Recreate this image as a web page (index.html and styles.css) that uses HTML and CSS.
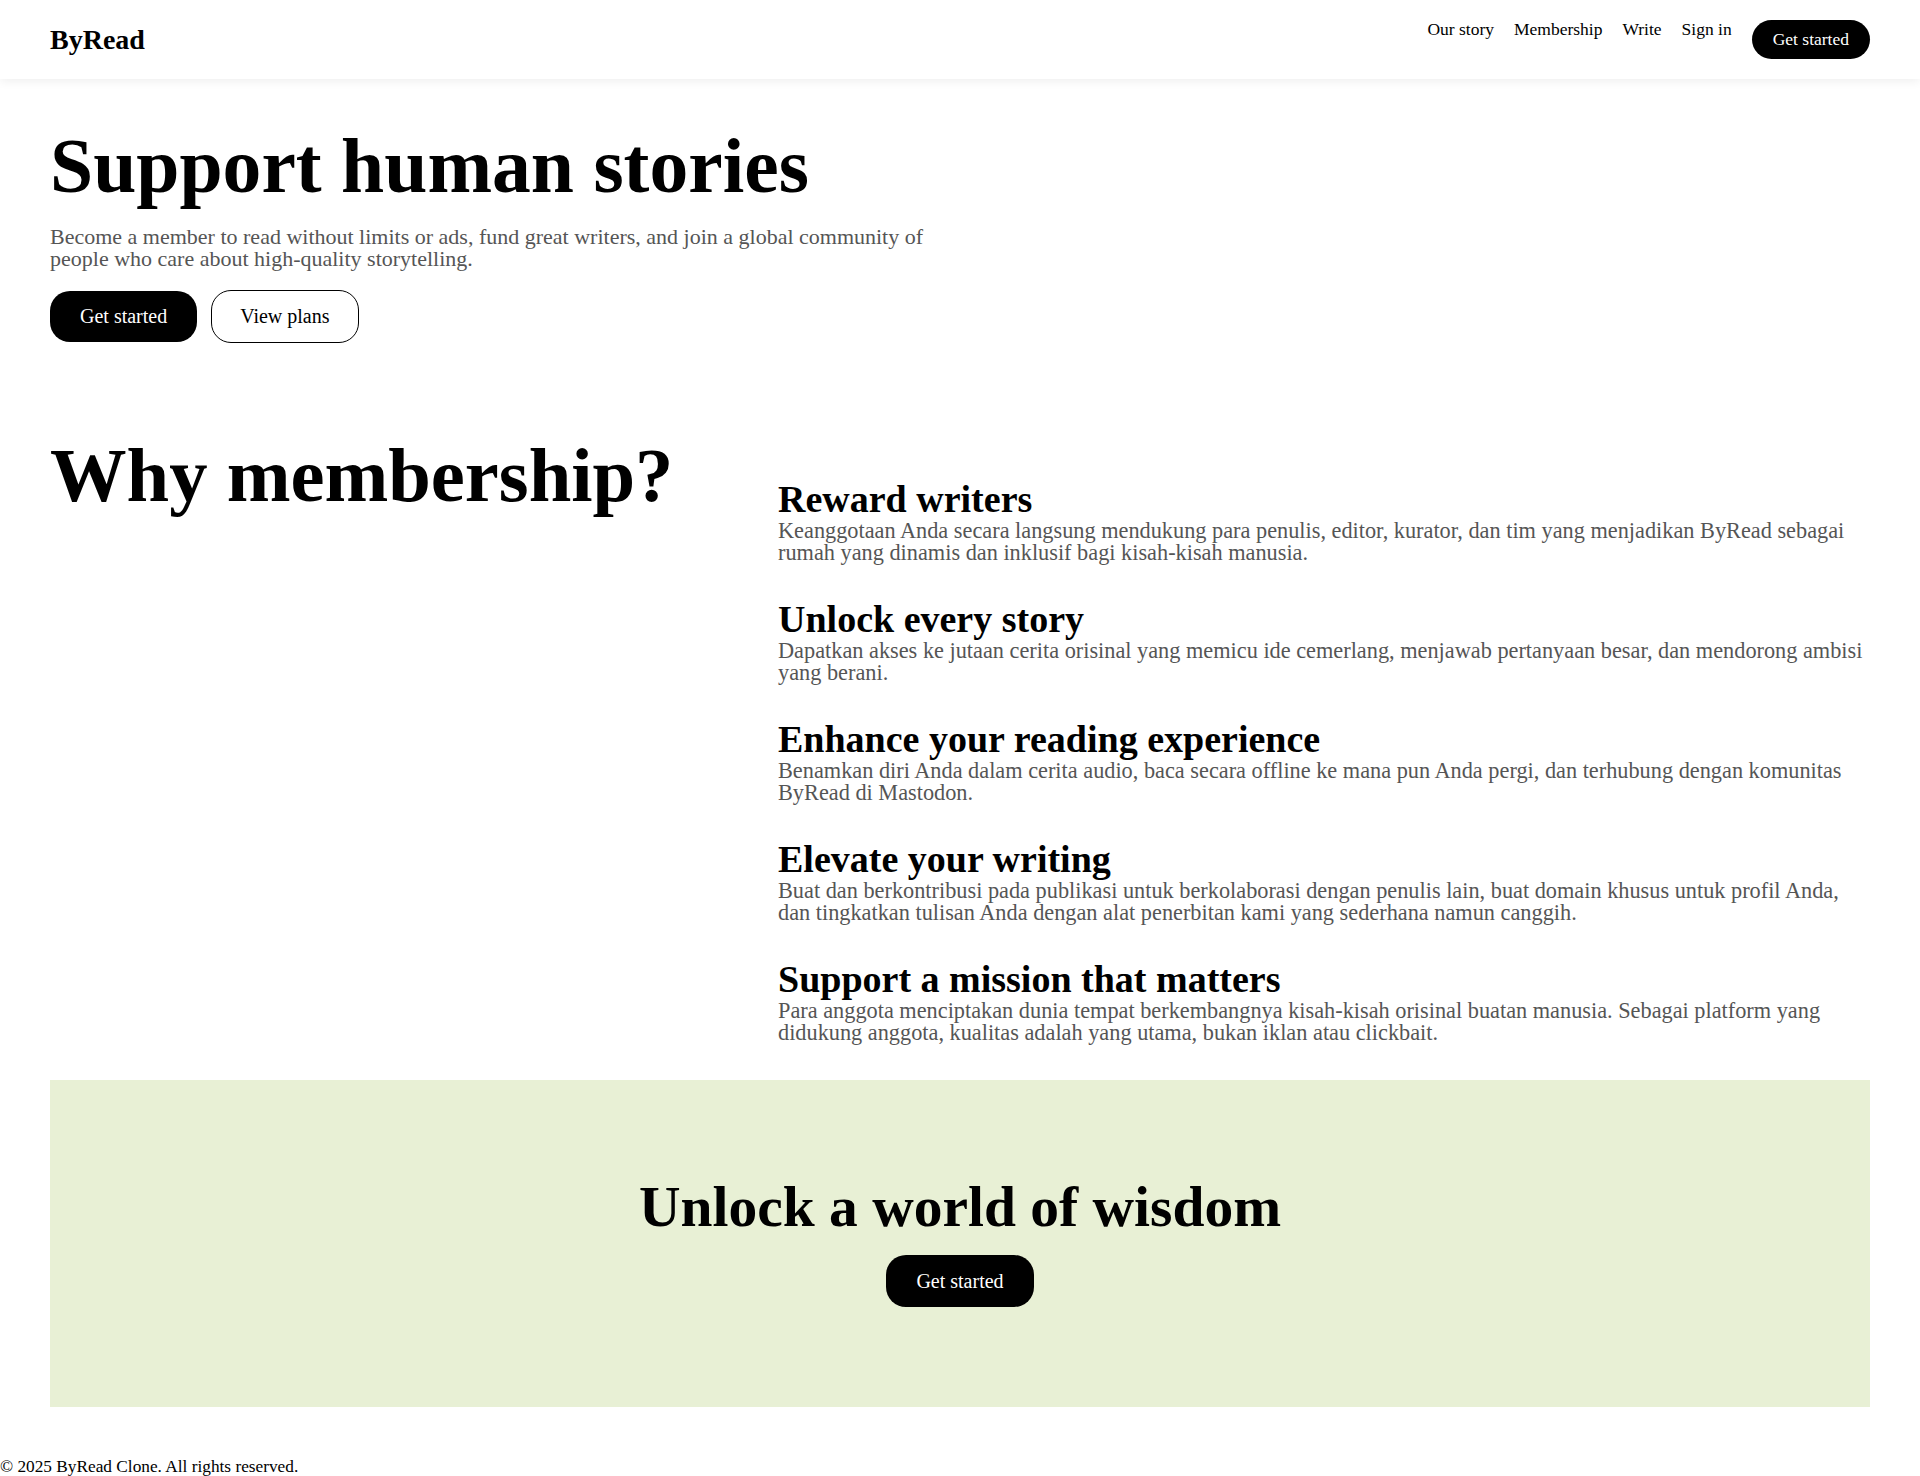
FILE: index.html
```html
<!DOCTYPE html>
<html lang="en">
<head>
<meta charset="utf-8">
<title>ByRead – Membership</title>
<link rel="stylesheet" href="styles.css">
</head>
<body>
<header class="nav">
  <a class="logo" href="#">ByRead</a>
  <div class="nav-right">
    <nav class="nav-links">
      <a href="#">Our story</a>
      <a href="#">Membership</a>
      <a href="#">Write</a>
      <a href="#">Sign in</a>
    </nav>
    <a class="btn btn-dark btn-small" href="#">Get started</a>
  </div>
</header>

<main>
  <section class="hero">
    <h1 class="hero-title">Support human stories</h1>
    <p class="hero-text">Become a member to read without limits or ads, fund great writers, and join a global community of people who care about high-quality storytelling.</p>
    <div class="hero-actions">
      <a class="btn btn-dark" href="#">Get started</a>
      <a class="btn btn-outline" href="#">View plans</a>
    </div>
  </section>

  <section class="why">
    <h2 class="why-title">Why membership?</h2>
    <div class="features">
      <div class="feature">
        <h3 class="feature-title">Reward writers</h3>
        <p class="feature-text">Keanggotaan Anda secara langsung mendukung para penulis, editor, kurator, dan tim yang menjadikan ByRead sebagai rumah yang dinamis dan inklusif bagi kisah-kisah manusia.</p>
      </div>
      <div class="feature">
        <h3 class="feature-title">Unlock every story</h3>
        <p class="feature-text">Dapatkan akses ke jutaan cerita orisinal yang memicu ide cemerlang, menjawab pertanyaan besar, dan mendorong ambisi yang berani.</p>
      </div>
      <div class="feature">
        <h3 class="feature-title">Enhance your reading experience</h3>
        <p class="feature-text">Benamkan diri Anda dalam cerita audio, baca secara offline ke mana pun Anda pergi, dan terhubung dengan komunitas ByRead di Mastodon.</p>
      </div>
      <div class="feature">
        <h3 class="feature-title">Elevate your writing</h3>
        <p class="feature-text">Buat dan berkontribusi pada publikasi untuk berkolaborasi dengan penulis lain, buat domain khusus untuk profil Anda, dan tingkatkan tulisan Anda dengan alat penerbitan kami yang sederhana namun canggih.</p>
      </div>
      <div class="feature">
        <h3 class="feature-title">Support a mission that matters</h3>
        <p class="feature-text">Para anggota menciptakan dunia tempat berkembangnya kisah-kisah orisinal buatan manusia. Sebagai platform yang didukung anggota, kualitas adalah yang utama, bukan iklan atau clickbait.</p>
      </div>
    </div>
  </section>

  <section class="cta">
    <h2 class="cta-title">Unlock a world of wisdom</h2>
    <a class="btn btn-dark btn-cta" href="#">Get started</a>
  </section>
</main>

<footer class="footer">© 2025 ByRead Clone. All rights reserved.</footer>
</body>
</html>
```

FILE: styles.css
```css
* {
  box-sizing: border-box;
}

html, body {
  margin: 0;
  padding: 0;
  background: #ffffff;
  color: #000000;
  font-family: "Liberation Serif", "Times New Roman", serif;
}

a {
  color: inherit;
  text-decoration: none;
}

/* ---------- Navigation ---------- */
.nav {
  height: 79px;
  padding: 20px 50px;
  display: flex;
  justify-content: space-between;
  align-items: center;
  background: #ffffff;
  box-shadow: 0 2px 10px rgba(0, 0, 0, 0.07);
  position: relative;
}

.logo {
  font-size: 28px;
  font-weight: 700;
  line-height: 32px;
}

.nav-right {
  display: flex;
  align-items: flex-start;
  gap: 20px;
}

.nav-links {
  display: flex;
  gap: 20px;
  font-size: 17.5px;
  line-height: 19px;
}

/* ---------- Buttons ---------- */
.btn {
  display: inline-block;
  border-radius: 20px;
  font-size: 20px;
  line-height: 21px;
  padding: 15px 30px;
  white-space: nowrap;
}

.btn-dark {
  background: #000000;
  color: #ffffff;
}

.btn-outline {
  background: #ffffff;
  color: #000000;
  border: 1px solid #000000;
  padding: 15px 28px;
}

.btn-small {
  font-size: 17.5px;
  line-height: 19px;
  padding: 10px 21px;
}

.btn-cta {
  line-height: 22px;
}

/* ---------- Hero ---------- */
.hero {
  padding: 45px 50px 0;
}

.hero-title {
  margin: 0;
  font-size: 77.6px;
  line-height: 84px;
  font-weight: 700;
}

.hero-text {
  margin: 18px 0 0;
  max-width: 900px;
  font-size: 22px;
  line-height: 22px;
  color: #555555;
}

.hero-actions {
  margin-top: 20px;
  display: flex;
  align-items: center;
  gap: 14px;
}

/* ---------- Why membership ---------- */
.why {
  margin-top: 91px;
  padding: 0 50px;
  display: grid;
  grid-template-columns: 2fr 3fr;
}

.why-title {
  margin: 0;
  font-size: 76.6px;
  line-height: 84px;
  font-weight: 700;
}

.features {
  padding-top: 47px;
  display: flex;
  flex-direction: column;
  gap: 37px;
}

.feature-title {
  margin: 0;
  font-size: 38px;
  line-height: 37px;
  font-weight: 700;
}

.feature-text {
  margin: 2px 0 0;
  font-size: 22.3px;
  line-height: 22px;
  color: #555555;
}

/* ---------- CTA ---------- */
.cta {
  margin: 36px 50px 0;
  padding: 95px 20px 100px;
  background: #e8f0d5;
  display: flex;
  flex-direction: column;
  align-items: center;
}

.cta-title {
  margin: 0 0 16px;
  font-size: 57.5px;
  line-height: 64px;
  font-weight: 700;
}

/* ---------- Footer ---------- */
.footer {
  margin-top: 50px;
  font-size: 17.3px;
  line-height: 19px;
}
```
